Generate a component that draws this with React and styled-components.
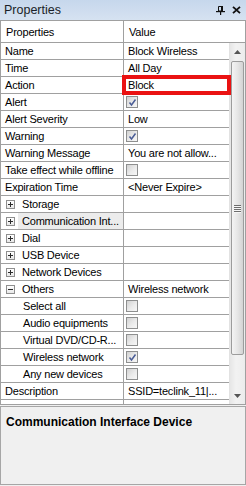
import React from 'react';
import styled, { createGlobalStyle } from 'styled-components';

const Global = createGlobalStyle`
  html, body { margin: 0; padding: 0; background: #f0f0f0; }
  body { width: 246px; height: 486px; overflow: hidden; font-family: "Liberation Sans", Arial, sans-serif; }
`;

const LINE = '#a0a0a0';

const Panel = styled.div`
  position: relative;
  display: flex;
  flex-direction: column;
  width: 246px;
  height: 486px;
  background: #f0f0f0;
`;

const TitleBar = styled.div`
  height: 20px;
  box-sizing: border-box;
  display: flex;
  align-items: center;
  justify-content: space-between;
  padding: 0 5px 0 4px;
  background: linear-gradient(#c6d7ec, #d6e2f1);
  font-size: 12.5px;
  color: #1a1f28;
`;

const TitleIcons = styled.div`
  display: flex;
  align-items: center;
  gap: 7px;
`;

const GridFrame = styled.div`
  border: 1px solid ${LINE};
  background: #fff;
  display: flex;
  flex-direction: column;
  height: 385px;
  box-sizing: border-box;
  font-size: 11px;
  letter-spacing: -0.2px;
  color: #000;
`;

const HeaderRow = styled.div`
  display: flex;
  height: 22px;
  box-sizing: border-box;
  border-bottom: 1px solid ${LINE};
`;

const HeaderCell = styled.div`
  display: flex;
  align-items: center;
  box-sizing: border-box;
  padding-left: ${p => p.$pad}px;
  width: ${p => (p.$w ? `${p.$w}px` : 'auto')};
  flex: ${p => (p.$w ? 'none' : '1')};
  border-right: ${p => (p.$w ? `1px solid ${LINE}` : 'none')};
`;

const Body = styled.div`
  flex: 1;
  display: flex;
  min-height: 0;
`;

const Rows = styled.div`
  width: 228px;
  display: flex;
  flex-direction: column;
`;

const Row = styled.div`
  display: flex;
  height: 17px;
  flex: none;
  box-sizing: border-box;
  border-bottom: 1px solid ${LINE};
`;

const NameCell = styled.div`
  width: 123px;
  flex: none;
  box-sizing: border-box;
  border-right: 1px solid ${LINE};
  display: flex;
  align-items: center;
  padding-left: ${p => p.$pad}px;
  white-space: nowrap;
  overflow: hidden;
`;

const Label = styled.span`
  flex: 1;
  align-self: stretch;
  display: flex;
  align-items: center;
  padding-left: ${p => p.$pad || 0}px;
  background: ${p => (p.$selected ? '#ececec' : 'transparent')};
`;

const ValueCell = styled.div`
  flex: 1;
  display: flex;
  align-items: center;
  padding-left: 4px;
  white-space: nowrap;
  overflow: hidden;
`;

const Filler = styled.div`
  flex: 1;
  display: flex;
`;

const FillerName = styled.div`
  width: 123px;
  border-right: 1px solid ${LINE};
  box-sizing: border-box;
`;

const Box = styled.span`
  width: 12px;
  height: 12px;
  margin-left: -2px;
  box-sizing: border-box;
  border: 1px solid #8e8f8f;
  background: linear-gradient(135deg, #d2d2d2 0%, #ebebeb 55%, #f7f7f7 100%);
  display: flex;
  align-items: center;
  justify-content: center;
`;

const Expander = styled.span`
  width: 9px;
  height: 9px;
  box-sizing: border-box;
  border: 1px solid #8f8f8f;
  background: linear-gradient(#ffffff, #e8e8e8);
  display: flex;
  align-items: center;
  justify-content: center;
  margin-right: 3px;
`;

const ScrollBar = styled.div`
  width: 16px;
  border-left: 1px solid #e2e2e2;
  box-sizing: border-box;
  background: linear-gradient(90deg, #e6e6e6, #f2f2f2 40%, #ececec);
  display: flex;
  flex-direction: column;
  align-items: center;
`;

const ArrowButton = styled.div`
  height: 17px;
  width: 100%;
  flex: none;
  display: flex;
  align-items: center;
  justify-content: center;
`;

const Thumb = styled.div`
  width: 13px;
  height: 294px;
  margin-top: 1px;
  box-sizing: border-box;
  border: 1px solid #9c9c9c;
  border-radius: 2px;
  background: linear-gradient(90deg, #f4f4f4, #e6e6e6 50%, #d3d3d3);
  display: flex;
  flex-direction: column;
  align-items: center;
  justify-content: center;
  gap: 1px;
`;

const Grip = styled.span`
  width: 7px;
  height: 1px;
  background: #6d6d6d;
  box-shadow: 0 1px 0 #f6f6f6;
`;

const Track = styled.div`
  flex: 1;
`;

const Gap = styled.div`
  height: 1px;
`;

const Description = styled.div`
  height: 79px;
  box-sizing: border-box;
  border: 1px solid #a6a6a6;
  background: #f0f0f0;
  padding: 8px 5px;
  font-weight: bold;
  font-size: 12px;
  color: #000;
`;

const Highlight = styled.div`
  position: absolute;
  left: 122px;
  top: 75px;
  width: 109px;
  height: 20px;
  box-sizing: border-box;
  border: 4px solid #ea1212;
  pointer-events: none;
`;

const Check = () => (
  <svg width="9" height="9" viewBox="0 0 9 9">
    <path d="M1.5 4.5 L3.5 7 L7.5 1.5" fill="none" stroke="#4a5d96" strokeWidth="1.5" />
  </svg>
);

const CheckBox = ({ checked }) => <Box>{checked && <Check />}</Box>;

const Plus = ({ open }) => (
  <Expander>
    <svg width="5" height="5" viewBox="0 0 5 5">
      <rect x="0" y="2" width="5" height="1" fill="#2b2b2b" />
      {!open && <rect x="2" y="0" width="1" height="5" fill="#2b2b2b" />}
    </svg>
  </Expander>
);

const rows = [
  { kind: 'prop', name: 'Name', value: 'Block Wireless' },
  { kind: 'prop', name: 'Time', value: 'All Day' },
  { kind: 'prop', name: 'Action', value: 'Block' },
  { kind: 'prop', name: 'Alert', check: true },
  { kind: 'prop', name: 'Alert Severity', value: 'Low' },
  { kind: 'prop', name: 'Warning', check: true },
  { kind: 'prop', name: 'Warning Message', value: 'You are not allow...' },
  { kind: 'prop', name: 'Take effect while offline', check: false },
  { kind: 'prop', name: 'Expiration Time', value: '<Never Expire>' },
  { kind: 'cat', name: 'Storage' },
  { kind: 'cat', name: 'Communication Int...', selected: true },
  { kind: 'cat', name: 'Dial' },
  { kind: 'cat', name: 'USB Device' },
  { kind: 'cat', name: 'Network Devices' },
  { kind: 'cat', name: 'Others', open: true, value: 'Wireless network' },
  { kind: 'child', name: 'Select all', check: false },
  { kind: 'child', name: 'Audio equipments', check: false },
  { kind: 'child', name: 'Virtual DVD/CD-R...', check: false },
  { kind: 'child', name: 'Wireless network', check: true },
  { kind: 'child', name: 'Any new devices', check: false },
  { kind: 'prop', name: 'Description', value: 'SSID=teclink_11|...' },
];

const Pin = () => (
  <svg width="9" height="9" viewBox="0 0 9 9">
    <path d="M2.5 0.5 H6.5 V5 H2.5 Z" fill="none" stroke="#111" strokeWidth="1" />
    <rect x="5" y="0" width="2" height="5" fill="#111" />
    <rect x="0" y="5" width="9" height="1.2" fill="#111" />
    <rect x="4" y="5" width="1.2" height="4" fill="#111" />
  </svg>
);

const Close = () => (
  <svg width="9" height="8" viewBox="0 0 9 8">
    <path d="M1 0.8 L8 7.2 M8 0.8 L1 7.2" stroke="#111" strokeWidth="1.8" />
  </svg>
);

const ArrowUp = () => (
  <svg width="7" height="4" viewBox="0 0 7 4">
    <path d="M0 4 L3.5 0 L7 4 Z" fill="#555" />
  </svg>
);

const ArrowDown = () => (
  <svg width="7" height="4" viewBox="0 0 7 4">
    <path d="M0 0 L3.5 4 L7 0 Z" fill="#555" />
  </svg>
);

const PropRow = ({ r }) => {
  let name;
  if (r.kind === 'cat') {
    name = (
      <NameCell $pad={5}>
        <Plus open={r.open} />
        <Label $pad={4} $selected={r.selected}>{r.name}</Label>
      </NameCell>
    );
  } else if (r.kind === 'child') {
    name = (
      <NameCell $pad={18}>
        <Label $pad={4}>{r.name}</Label>
      </NameCell>
    );
  } else {
    name = (
      <NameCell $pad={4}>
        <Label>{r.name}</Label>
      </NameCell>
    );
  }
  return (
    <Row>
      {name}
      <ValueCell>{r.check !== undefined ? <CheckBox checked={r.check} /> : r.value}</ValueCell>
    </Row>
  );
};

export default function App() {
  return (
    <>
      <Global />
      <Panel>
        <TitleBar>
          <span>Properties</span>
          <TitleIcons>
            <Pin />
            <Close />
          </TitleIcons>
        </TitleBar>
        <GridFrame>
          <HeaderRow>
            <HeaderCell $w={123} $pad={5}>Properties</HeaderCell>
            <HeaderCell $pad={5}>Value</HeaderCell>
          </HeaderRow>
          <Body>
            <Rows>
              {rows.map((r, i) => (
                <PropRow key={i} r={r} />
              ))}
              <Filler>
                <FillerName />
              </Filler>
            </Rows>
            <ScrollBar>
              <ArrowButton><ArrowUp /></ArrowButton>
              <Thumb>
                <Grip />
                <Grip />
                <Grip />
                <Grip />
              </Thumb>
              <Track />
              <ArrowButton><ArrowDown /></ArrowButton>
            </ScrollBar>
          </Body>
        </GridFrame>
        <Gap />
        <Description>Communication Interface Device</Description>
        <Highlight />
      </Panel>
    </>
  );
}
